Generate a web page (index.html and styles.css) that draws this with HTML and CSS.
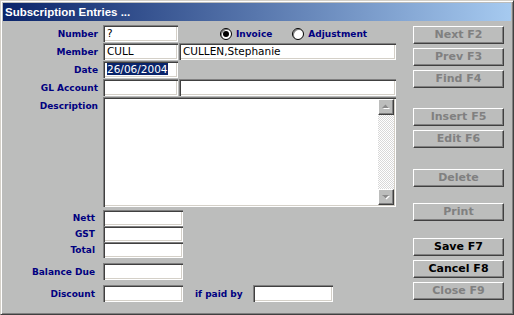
FILE: index.html
```html
<!DOCTYPE html>
<html>
<head>
<meta charset="utf-8">
<link rel="stylesheet" href="styles.css">
</head>
<body>
<div class="window">
  <div class="titlebar">Subscription Entries ...</div>
  <div class="content">
    <div class="form">
      <div class="row">
        <span class="lbl">Number</span>
        <div class="field w75">?</div>
        <div class="radios">
          <span class="radio"><span class="circle on"></span>Invoice</span>
          <span class="radio adj"><span class="circle"></span>Adjustment</span>
        </div>
      </div>
      <div class="row">
        <span class="lbl">Member</span>
        <div class="field w75">CULL</div>
        <div class="field w217">CULLEN,Stephanie</div>
      </div>
      <div class="row">
        <span class="lbl">Date</span>
        <div class="field w75"><span class="sel">26/06/2004</span></div>
      </div>
      <div class="row">
        <span class="lbl">GL Account</span>
        <div class="field w75"></div>
        <div class="field w217"></div>
      </div>
      <div class="row desc">
        <span class="lbl top">Description</span>
        <div class="textarea">
          <div class="textbody"></div>
          <div class="scrollbar">
            <div class="sbtn">
              <svg width="14" height="14" viewBox="0 0 14 14"><polygon points="4,9 11,9 7.5,5.5" fill="#ffffff"/><polygon points="3,8 10,8 6.5,4.5" fill="#8a8a8a"/></svg>
            </div>
            <div class="track"></div>
            <div class="sbtn">
              <svg width="14" height="14" viewBox="0 0 14 14"><polygon points="4,6 11,6 7.5,9.5" fill="#ffffff"/><polygon points="3,5 10,5 6.5,8.5" fill="#8a8a8a"/></svg>
            </div>
          </div>
        </div>
      </div>
      <div class="row short">
        <span class="lbl lo">Nett</span>
        <div class="field w80 h16"></div>
      </div>
      <div class="row short">
        <span class="lbl lo">GST</span>
        <div class="field w80 h16"></div>
      </div>
      <div class="row short">
        <span class="lbl lo">Total</span>
        <div class="field w80 h16"></div>
      </div>
      <div class="row gap5">
        <span class="lbl lo">Balance Due</span>
        <div class="field w80"></div>
      </div>
      <div class="row gap5">
        <span class="lbl lo">Discount</span>
        <div class="field w80"></div>
        <span class="paid">if paid by</span>
        <div class="field w80"></div>
      </div>
    </div>
    <div class="buttons">
      <div class="btn">Next F2</div>
      <div class="btn">Prev F3</div>
      <div class="btn">Find F4</div>
      <div class="btn s1">Insert F5</div>
      <div class="btn">Edit F6</div>
      <div class="btn s2">Delete</div>
      <div class="btn s3">Print</div>
      <div class="btn s4 active">Save F7</div>
      <div class="btn active">Cancel F8</div>
      <div class="btn">Close F9</div>
    </div>
  </div>
</div>
</body>
</html>
```

FILE: styles.css
```css
html, body {
  margin: 0;
  padding: 0;
  background: #bcbdbc;
}

.window {
  box-sizing: border-box;
  width: 514px;
  height: 315px;
  background: #bcbdbc;
  border: 1px solid;
  border-color: #d4d0c8 #404040 #404040 #d4d0c8;
  box-shadow: inset 1px 1px #ffffff, inset -1px -1px #808080;
  padding: 2px;
  display: flex;
  flex-direction: column;
}

.titlebar {
  height: 18px;
  line-height: 18px;
  padding-left: 2px;
  background: linear-gradient(to right, #0a246a, #a6caf0);
  color: #ffffff;
  font-family: "Liberation Sans", Arial, sans-serif;
  font-weight: bold;
  font-size: 11.5px;
  white-space: nowrap;
}

.content {
  flex: 1;
  display: flex;
}

.form {
  width: 400px;
  padding-top: 4px;
  display: flex;
  flex-direction: column;
}

.row {
  display: flex;
  align-items: center;
  height: 17px;
  margin-bottom: 1px;
}

.row.desc {
  height: 110px;
  align-items: flex-start;
  margin-bottom: 3px;
}

.row.short {
  height: 16px;
  margin-bottom: 0;
}

.row.gap5 {
  margin-top: 5px;
  margin-bottom: 0;
}

.lbl {
  box-sizing: border-box;
  width: 100px;
  padding-right: 5px;
  text-align: right;
  font-family: "DejaVu Sans", sans-serif;
  font-weight: bold;
  font-size: 9px;
  color: #000080;
  white-space: nowrap;
}

.lbl.lo {
  padding-right: 8px;
}

.lbl.top {
  padding-top: 4px;
  line-height: 11px;
}

.field {
  box-sizing: border-box;
  height: 17px;
  background: #ffffff;
  box-shadow: inset 1px 1px #808080, inset 2px 2px #404040, inset -1px -1px #ffffff, inset -2px -2px #d4d0c8;
  padding-left: 4px;
  font-family: "DejaVu Sans", sans-serif;
  font-size: 10.5px;
  line-height: 17px;
  color: #000000;
  white-space: nowrap;
  overflow: hidden;
}

.field.h16 {
  height: 16px;
  line-height: 16px;
}

.w75 { width: 75px; }
.w80 { width: 80px; }
.w217 { width: 217px; margin-left: 1px; }

.sel {
  background: #0a246a;
  color: #ffffff;
}

.radios {
  display: flex;
  align-items: center;
  margin-left: 42px;
}

.radio {
  display: flex;
  align-items: center;
  font-family: "DejaVu Sans", sans-serif;
  font-weight: bold;
  font-size: 9px;
  color: #000080;
}

.radio.adj {
  margin-left: 20px;
}

.circle {
  box-sizing: border-box;
  width: 12px;
  height: 12px;
  border-radius: 50%;
  border: 1px solid #000000;
  background: #ffffff;
  box-shadow: inset 1px 1px #808080;
  margin-right: 4px;
  display: flex;
  align-items: center;
  justify-content: center;
}

.circle.on::after {
  content: "";
  width: 6px;
  height: 6px;
  border-radius: 50%;
  background: #000000;
}

.textarea {
  box-sizing: border-box;
  width: 293px;
  height: 110px;
  background: #ffffff;
  box-shadow: inset 1px 1px #808080, inset 2px 2px #404040, inset -1px -1px #ffffff, inset -2px -2px #d4d0c8;
  padding: 2px;
  display: flex;
}

.textbody {
  flex: 1;
}

.scrollbar {
  width: 16px;
  display: flex;
  flex-direction: column;
}

.sbtn {
  box-sizing: border-box;
  width: 16px;
  height: 16px;
  background: #bcbdbc;
  border: 1px solid;
  border-color: #ffffff #404040 #404040 #ffffff;
  box-shadow: inset -1px -1px #808080;
  display: flex;
  align-items: center;
  justify-content: center;
}

.track {
  flex: 1;
  background: repeating-conic-gradient(#d8d8d8 0 25%, #ffffff 0 50%) 0 0 / 2px 2px;
}

.paid {
  margin-left: 12px;
  width: 58px;
  font-family: "DejaVu Sans", sans-serif;
  font-weight: bold;
  font-size: 9px;
  color: #000080;
  white-space: nowrap;
}

.buttons {
  margin-left: 10px;
  padding-top: 5px;
  display: flex;
  flex-direction: column;
  gap: 4px;
}

.btn {
  box-sizing: border-box;
  width: 91px;
  height: 18px;
  border: 1px solid;
  border-color: #ffffff #404040 #404040 #ffffff;
  box-shadow: inset -1px -1px #808080;
  background: #bcbdbc;
  text-align: center;
  font-family: "DejaVu Sans", sans-serif;
  font-weight: bold;
  font-size: 11px;
  line-height: 16px;
  color: #808080;
  white-space: nowrap;
}

.btn.active {
  color: #000000;
}

.s1 { margin-top: 16px; }
.s2 { margin-top: 17px; }
.s3 { margin-top: 12px; }
.s4 { margin-top: 13px; }
```
